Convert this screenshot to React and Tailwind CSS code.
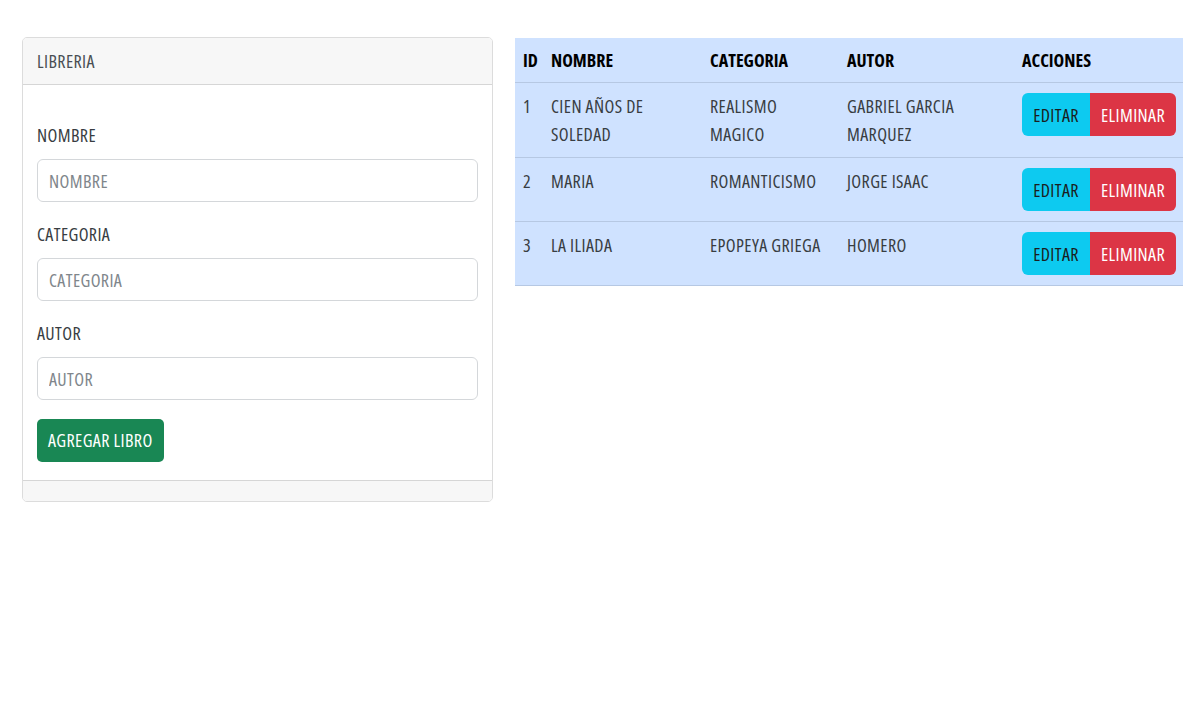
import { useState } from 'react';

const libros = [
    { id: 1, nombre: 'CIEN AÑOS DE SOLEDAD', categoria: 'REALISMO MAGICO', autor: 'GABRIEL GARCIA MARQUEZ' },
    { id: 2, nombre: 'MARIA', categoria: 'ROMANTICISMO', autor: 'JORGE ISAAC' },
    { id: 3, nombre: 'LA ILIADA', categoria: 'EPOPEYA GRIEGA', autor: 'HOMERO' },
];

const Campo = ({ label, value, onChange }) => (
    <div>
        <label className="block leading-[28px] mb-[10px]">{label}</label>
        <input
            value={value}
            onChange={e => onChange(e.target.value)}
            placeholder={label}
            className="w-full h-[43px] px-[11px] border border-[#d4d7da] rounded-[6px] bg-white outline-none tracking-[0.4px] placeholder:text-[#80868b]"
        />
    </div>
);

const App = () => {
    const [form, setForm] = useState({ nombre: '', categoria: '', autor: '' });

    return (
        <div className="min-h-[720px] bg-white text-[#383d42] text-[18px] tracking-[0.4px] font-stretch-condensed [font-family:'Open_Sans','Liberation_Sans',sans-serif]">
            <div className="flex items-start gap-[22px] pt-[37px] pl-[22px]">
                <div className="w-[471px] border border-[#dcdcdc] rounded-[5px] overflow-hidden">
                    <div className="h-[47px] px-[14px] flex items-center bg-[#f7f7f7] border-b border-[#d6d6d6] text-[#494e53]">
                        LIBRERIA
                    </div>
                    <div className="pl-[14px] pr-[14px] pt-[36px] pb-[18px] flex flex-col gap-[18px]">
                        <Campo label="NOMBRE" value={form.nombre} onChange={v => setForm({ ...form, nombre: v })} />
                        <Campo label="CATEGORIA" value={form.categoria} onChange={v => setForm({ ...form, categoria: v })} />
                        <Campo label="AUTOR" value={form.autor} onChange={v => setForm({ ...form, autor: v })} />
                        <div className="pt-[1px]">
                            <button className="h-[43px] px-[11px] rounded-[5px] bg-[#198754] text-white">
                                AGREGAR LIBRO
                            </button>
                        </div>
                    </div>
                    <div className="h-[21px] bg-[#f7f7f7] border-t border-[#d6d6d6]"></div>
                </div>

                <table className="w-[668px] table-fixed border-collapse bg-[#cfe2ff] mt-[1px]">
                    <colgroup>
                        <col className="w-[28px]" />
                        <col className="w-[159px]" />
                        <col className="w-[137px]" />
                        <col className="w-[175px]" />
                        <col className="w-[169px]" />
                    </colgroup>
                    <thead>
                        <tr className="border-b border-[#b6c8e3] text-black tracking-normal">
                            <th className="pl-[8px] py-[8px] text-left font-bold leading-[28px]">ID</th>
                            <th className="pl-[8px] py-[8px] text-left font-bold leading-[28px]">NOMBRE</th>
                            <th className="pl-[8px] py-[8px] text-left font-bold leading-[28px]">CATEGORIA</th>
                            <th className="pl-[8px] py-[8px] text-left font-bold leading-[28px]">AUTOR</th>
                            <th className="pl-[8px] py-[8px] text-left font-bold leading-[28px]">ACCIONES</th>
                        </tr>
                    </thead>
                    <tbody>
                        {libros.map(libro => (
                            <tr key={libro.id} className="border-b border-[#b6c8e3] align-top leading-[28px]">
                                <td className="pl-[8px] py-[9px]">{libro.id}</td>
                                <td className="pl-[8px] pr-[12px] py-[9px]">{libro.nombre}</td>
                                <td className="pl-[8px] pr-[12px] py-[9px]">{libro.categoria}</td>
                                <td className="pl-[8px] pr-[12px] py-[9px]">{libro.autor}</td>
                                <td className="pl-[8px] py-[10px]">
                                    <div className="flex">
                                        <button className="h-[43px] w-[68px] bg-[#0dcaf0] text-[#1a1d20] rounded-l-[6px]">EDITAR</button>
                                        <button className="h-[43px] w-[86px] bg-[#dc3545] text-white rounded-r-[6px]">ELIMINAR</button>
                                    </div>
                                </td>
                            </tr>
                        ))}
                    </tbody>
                </table>
            </div>
        </div>
    );
};

export default App;
